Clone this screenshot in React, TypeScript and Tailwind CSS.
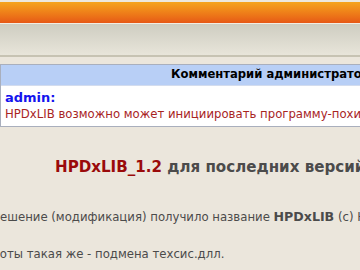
import React from "react";

const font = { fontFamily: '"DejaVu Sans Condensed", "DejaVu Sans", Verdana, sans-serif' };
const boldFont = { fontFamily: '"DejaVu Sans", Verdana, sans-serif' };

const App = () => {
  return (
    <div className="w-[360px] h-[270px] overflow-hidden bg-[#ebe6dc]" style={font}>
      {/* top bars */}
      <div className="h-[2px] bg-[#ede8dc]" />
      <div className="h-[21px] bg-gradient-to-b from-[#f5a41c] to-[#e65816]" />
      <div className="h-[1px] bg-[#f1ede4]" />
      <div className="h-[31px] bg-gradient-to-b from-[#cecdc1] to-[#e8e5da]" />
      <div className="h-[2px] bg-[#c7c3b3]" />
      <div className="h-[7px] bg-[#ebe6dc]" />

      {/* admin comment box */}
      <div className="w-[560px] border border-[#a9afbd] bg-white">
        <div className="h-[21px] bg-[#b8cff6] border-b border-[#d3dcee] flex items-center pl-[170px]">
          <span className="text-[11.6px] font-bold text-black whitespace-nowrap leading-none" style={boldFont}>
            Комментарий администратора
          </span>
        </div>
        <div className="h-[40px] pl-[4px] pt-[4px] text-[13px] leading-[16px] whitespace-nowrap">
          <div className="font-bold text-[#1414ee]" style={boldFont}>admin:</div>
          <div className="text-[#a8241f]">
            HPDxLIB возможно может инициировать программу-похитителя
          </div>
        </div>
      </div>

      {/* article */}
      <div className="whitespace-nowrap">
        <div className="pt-[30px] pl-[55px] text-[15.1px] font-bold leading-[20px] text-[#4b4b4b]" style={boldFont}>
          <span className="text-[#9a0a0a]">HPDxLIB_1.2</span> для последних версий Windows
        </div>
        <div className="mt-[32px] -ml-[7px] text-[13px] leading-[16px] text-[#4b4b4b]">
          Решение (модификация) получило название <b className="text-[12.6px]" style={boldFont}>HPDxLIB</b> (с) HPD
        </div>
        <div className="mt-[21px] -ml-[22px] text-[13px] leading-[16px] text-[#4b4b4b]">
          работы такая же - подмена техсис.длл.
        </div>
      </div>
    </div>
  );
};

export default App;
